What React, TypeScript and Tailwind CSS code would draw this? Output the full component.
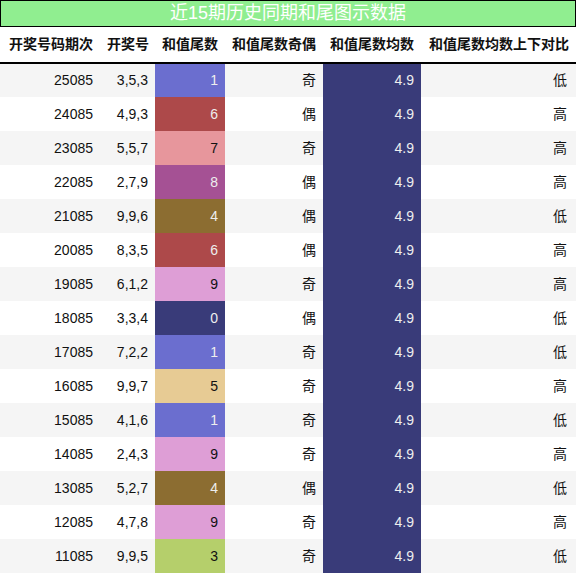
const colors: Record<number, { bg: string; fg: string }> = {
  0: { bg: "bg-[#393b79]", fg: "text-[#eeeeee]" },
  1: { bg: "bg-[#6b6ecf]", fg: "text-[#eeeeee]" },
  3: { bg: "bg-[#b5cf6b]", fg: "text-[#111111]" },
  4: { bg: "bg-[#8c6d31]", fg: "text-[#eeeeee]" },
  5: { bg: "bg-[#e7cb94]", fg: "text-[#111111]" },
  6: { bg: "bg-[#ad494a]", fg: "text-[#eeeeee]" },
  7: { bg: "bg-[#e7969c]", fg: "text-[#111111]" },
  8: { bg: "bg-[#a55194]", fg: "text-[#eeeeee]" },
  9: { bg: "bg-[#de9ed6]", fg: "text-[#111111]" },
};

const rows: [string, string, number, string, string][] = [
  ["25085", "3,5,3", 1, "奇", "低"],
  ["24085", "4,9,3", 6, "偶", "高"],
  ["23085", "5,5,7", 7, "奇", "高"],
  ["22085", "2,7,9", 8, "偶", "高"],
  ["21085", "9,9,6", 4, "偶", "低"],
  ["20085", "8,3,5", 6, "偶", "高"],
  ["19085", "6,1,2", 9, "奇", "高"],
  ["18085", "3,3,4", 0, "偶", "低"],
  ["17085", "7,2,2", 1, "奇", "低"],
  ["16085", "9,9,7", 5, "奇", "高"],
  ["15085", "4,1,6", 1, "奇", "低"],
  ["14085", "2,4,3", 9, "奇", "高"],
  ["13085", "5,2,7", 4, "偶", "低"],
  ["12085", "4,7,8", 9, "奇", "高"],
  ["11085", "9,9,5", 3, "奇", "低"],
];

const heads = ["开奖号码期次", "开奖号", "和值尾数", "和值尾数奇偶", "和值尾数均数", "和值尾数均数上下对比"];

export default function App() {
  return (
    <div className="w-[576px] h-[574px] overflow-hidden bg-white text-[14px] text-[#111111] font-['Liberation_Sans','Noto_Sans_CJK_SC',sans-serif]">
      <div className="h-[27px] border border-black bg-[#90ee90] text-white text-[18px] leading-[25px] text-center">
        近15期历史同期和尾图示数据
      </div>
      <table className="w-[576px] table-fixed border-collapse">
        <colgroup>
          <col className="w-[100px]" />
          <col className="w-[55px]" />
          <col className="w-[70px]" />
          <col className="w-[98px]" />
          <col className="w-[98px]" />
          <col />
        </colgroup>
        <thead>
          <tr className="h-[36px] border-b-2 border-black">
            {heads.map((h) => (
              <th key={h} className="px-[7px] text-right font-bold whitespace-nowrap">
                {h}
              </th>
            ))}
          </tr>
        </thead>
        <tbody>
          {rows.map(([id, nums, tail, odd, cmp], i) => (
            <tr key={id} className={"h-[34px] " + (i % 2 === 0 ? "bg-[#f5f5f5]" : "bg-white")}>
              <td className="px-[7px] text-right">{id}</td>
              <td className="px-[7px] text-right">{nums}</td>
              <td className={"px-[7px] text-right " + colors[tail].bg + " " + colors[tail].fg}>{tail}</td>
              <td className="px-[7px] text-right">{odd}</td>
              <td className="px-[7px] text-right bg-[#393b79] text-[#eeeeee]">4.9</td>
              <td className="px-[9px] text-right">{cmp}</td>
            </tr>
          ))}
        </tbody>
      </table>
    </div>
  );
}
